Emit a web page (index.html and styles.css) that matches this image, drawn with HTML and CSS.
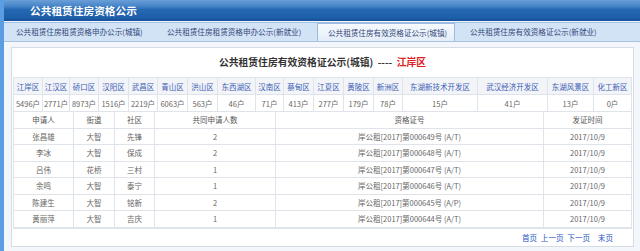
FILE: index.html
```html
<!DOCTYPE html>
<html lang="zh">
<head>
    <meta charset="UTF-8">
    <title>公共租赁住房资格公示</title>
    <link rel="stylesheet" href="styles.css">
</head>
<body>

<div class="frame">
    <!-- 顶部标题 -->
    <div class="titlebar">公共租赁住房资格公示</div>

    <!-- 选项卡 -->
    <div class="tabs">
        <div class="tab t1">公共租赁住房租赁资格申办公示(城镇)</div>
        <div class="tab t2">公共租赁住房租赁资格申办公示(新就业)</div>
        <div class="tab t3 active">公共租赁住房有效资格证公示(城镇)</div>
        <div class="tab t4">公共租赁住房有效资格证公示(新就业)</div>
    </div>

    <div class="content">
        <div class="panel">
            <h2 class="heading">公共租赁住房有效资格证公示(城镇) &nbsp;---- &nbsp;<span class="area">江岸区</span></h2>

            <!-- 各区户数 -->
            <table class="districts">
                <colgroup>
                    <col style="width:29px"><col style="width:27px"><col style="width:29px"><col style="width:30px">
                    <col style="width:29px"><col style="width:30px"><col style="width:30px"><col style="width:38px">
                    <col style="width:28px"><col style="width:30px"><col style="width:30px"><col style="width:30px">
                    <col style="width:29px"><col style="width:75px"><col style="width:70px"><col style="width:46px">
                    <col>
                </colgroup>
                <tr class="names">
                    <td>江岸区</td><td>江汉区</td><td>硚口区</td><td>汉阳区</td><td>武昌区</td><td>青山区</td>
                    <td>洪山区</td><td>东西湖区</td><td>汉南区</td><td>蔡甸区</td><td>江夏区</td><td>黄陂区</td>
                    <td>新洲区</td><td>东湖新技术开发区</td><td>武汉经济开发区</td><td>东湖风景区</td><td>化工新区</td>
                </tr>
                <tr class="counts">
                    <td>5496户</td><td>2771户</td><td>8973户</td><td>1516户</td><td>2219户</td><td>6063户</td>
                    <td>563户</td><td>46户</td><td>71户</td><td>413户</td><td>277户</td><td>179户</td>
                    <td>78户</td><td>15户</td><td>41户</td><td>13户</td><td>0户</td>
                </tr>
            </table>

            <!-- 资格证列表 -->
            <table class="list">
                <colgroup>
                    <col style="width:60px"><col style="width:41px"><col style="width:40px">
                    <col style="width:121px"><col style="width:268px"><col>
                </colgroup>
                <tr class="head">
                    <td>申请人</td><td>街道</td><td>社区</td><td>共同申请人数</td><td>资格证号</td><td>发证时间</td>
                </tr>
                <tr><td>张昌雄</td><td>大智</td><td>先锋</td><td>2</td><td>岸公租[2017]第000649号 (A/T)</td><td>2017/10/9</td></tr>
                <tr><td>李冰</td><td>大智</td><td>保成</td><td>2</td><td>岸公租[2017]第000648号 (A/T)</td><td>2017/10/9</td></tr>
                <tr><td>吕伟</td><td>花桥</td><td>三村</td><td>1</td><td>岸公租[2017]第000647号 (A/T)</td><td>2017/10/9</td></tr>
                <tr><td>余鸣</td><td>大智</td><td>泰宁</td><td>1</td><td>岸公租[2017]第000646号 (A/T)</td><td>2017/10/9</td></tr>
                <tr><td>陈建生</td><td>大智</td><td>铭新</td><td>2</td><td>岸公租[2017]第000645号 (A/P)</td><td>2017/10/9</td></tr>
                <tr><td>黄丽萍</td><td>大智</td><td>吉庆</td><td>1</td><td>岸公租[2017]第000644号 (A/T)</td><td>2017/10/9</td></tr>
            </table>

            <!-- 分页 -->
            <div class="pager">
                <a href="#">首页</a>
                <a href="#">上一页</a>
                <a href="#">下一页</a>
                <a href="#" class="last">末页</a>
            </div>
        </div>
    </div>
</div>

</body>
</html>
```

FILE: styles.css
```css
:root {
    --blue-1: #5b9de2;
    --blue-2: #1f62ae;
    --tab-bg: #d2e3f6;
    --line: #dfe4ea;
    --link: #2b55bf;
}

body {
    margin: 0;
    background: #f3f6fa;
    font-family: "Noto Sans CJK SC", "Noto Sans", sans-serif;
    color: #666;
    overflow: hidden;
}

.frame {
    height: 251px;
    border-left: 4px solid var(--blue-1);
    background: #f3f6fa;
}

/* 标题栏 */
.titlebar {
    height: 21px;
    line-height: 22px;
    padding-left: 26px;
    color: white;
    font-size: 10.7px;
    font-weight: bold;
    background: linear-gradient(#6a9fd8 0%, #4583c8 30%, #2668b3 45%, #1d5ea9 85%, #154f96 100%);
}

/* 选项卡 */
.tabs {
    display: flex;
    height: 18px;
    margin-top: 1px;
    padding-left: 2px;
    background: var(--tab-bg);
    border-top: 1px solid #9fc0e6;
    border-bottom: 1px solid #a8c3e2;
}

.tab {
    font-size: 7.6px;
    line-height: 18px;
    color: #34477a;
    white-space: nowrap;
    padding-left: 10px;
    box-sizing: border-box;
}

.t1 { width: 151px; }
.t2 { width: 160px; }
.t3 { width: 138px; }
.t4 { padding-left: 15px; }

.tab.active {
    background: linear-gradient(#f6f9fd, #e4eef9);
    border: 1px solid #9dbbe0;
    border-bottom: none;
    line-height: 17px;
}

/* 内容面板 */
.content {
    padding: 5px 6px 0 7px;
}

.panel {
    background: white;
    border: 1px solid #d6dce4;
    padding: 0 1px;
}

.heading {
    margin: 0;
    height: 29px;
    line-height: 28px;
    text-align: center;
    font-size: 9.8px;
    color: #333;
}

.area {
    color: #e0201e;
}

table {
    width: 100%;
    table-layout: fixed;
    border-collapse: collapse;
}

td {
    border: 1px solid var(--line);
    text-align: center;
    font-size: 7.5px;
    white-space: nowrap;
    overflow: hidden;
    padding: 0;
}

.districts td {
    height: 16px;
}

.districts .names td {
    background: #f2f4f8;
    color: #3b5cb5;
}

.list td {
    height: 15.5px;
}

.list tr:first-child td {
    border-top: none;
}

.list .head td {
    color: #555;
}

.pager {
    height: 17px;
    line-height: 17px;
    text-align: right;
    padding-right: 19px;
    border-top: 1px solid var(--line);
    font-size: 7.6px;
}

.pager a {
    color: var(--link);
    text-decoration: none;
    margin-left: 2px;
}

.pager a.last {
    margin-left: 6px;
}
```
